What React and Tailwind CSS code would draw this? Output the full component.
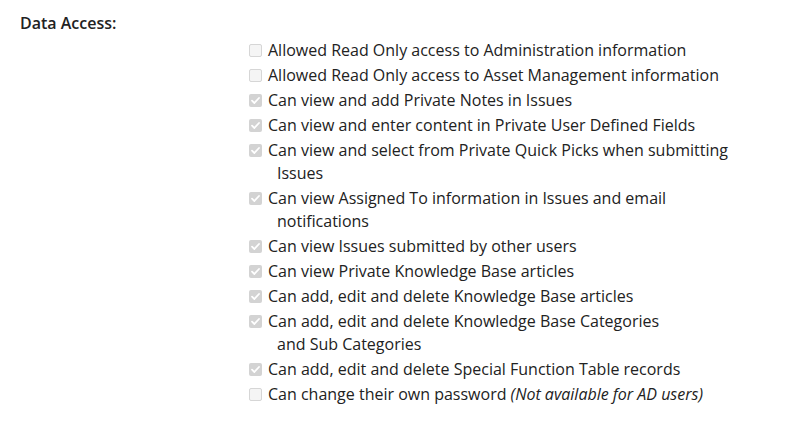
const items = [
  { lines: ['Allowed Read Only access to Administration information'], checked: false },
  { lines: ['Allowed Read Only access to Asset Management information'], checked: false },
  { lines: ['Can view and add Private Notes in Issues'], checked: true },
  { lines: ['Can view and enter content in Private User Defined Fields'], checked: true },
  { lines: ['Can view and select from Private Quick Picks when submitting', 'Issues'], checked: true },
  { lines: ['Can view Assigned To information in Issues and email', 'notifications'], checked: true },
  { lines: ['Can view Issues submitted by other users'], checked: true },
  { lines: ['Can view Private Knowledge Base articles'], checked: true },
  { lines: ['Can add, edit and delete Knowledge Base articles'], checked: true },
  { lines: ['Can add, edit and delete Knowledge Base Categories', 'and Sub Categories'], checked: true },
  { lines: ['Can add, edit and delete Special Function Table records'], checked: true },
  { lines: ['Can change their own password'], checked: false, note: '(Not available for AD users)' },
];

function Box({ checked }) {
  if (!checked) {
    return <span className="mt-[5px] w-[13px] h-[13px] shrink-0 rounded-[2px] border border-[#d6d6d6] bg-[#f5f5f5]" />;
  }
  return (
    <span className="mt-[5px] w-[13px] h-[13px] shrink-0 rounded-[2px] bg-[#d3d3d3] flex items-center justify-center">
      <svg width="11" height="11" viewBox="0 0 11 11" fill="none">
        <path d="M2 5.6 L4.4 8 L9 3" stroke="#fff" strokeWidth="1.8" strokeLinecap="round" strokeLinejoin="round" />
      </svg>
    </span>
  );
}

export default function App() {
  return (
    <div className="w-[789px] h-[422px] bg-white text-[#222] pt-[12px]" style={{ fontFamily: '"Open Sans", "Noto Sans", sans-serif' }}>
      <h3 className="pl-[20px] text-[16px] leading-[23px] font-semibold">Data Access:</h3>

      <div className="ml-[249px] mt-[4px] flex flex-col gap-[2px] text-[16px] leading-[23px]">
        {items.map((item, i) => (
          <label key={i} className="flex gap-[6px]">
            <Box checked={item.checked} />
            <span className="flex flex-col">
              {item.lines.map((line, j) => (
                <span key={j} className={j > 0 ? 'pl-[9px]' : ''}>
                  {line}
                  {item.note && j === 0 && <i> {item.note}</i>}
                </span>
              ))}
            </span>
          </label>
        ))}
      </div>
    </div>
  );
}
